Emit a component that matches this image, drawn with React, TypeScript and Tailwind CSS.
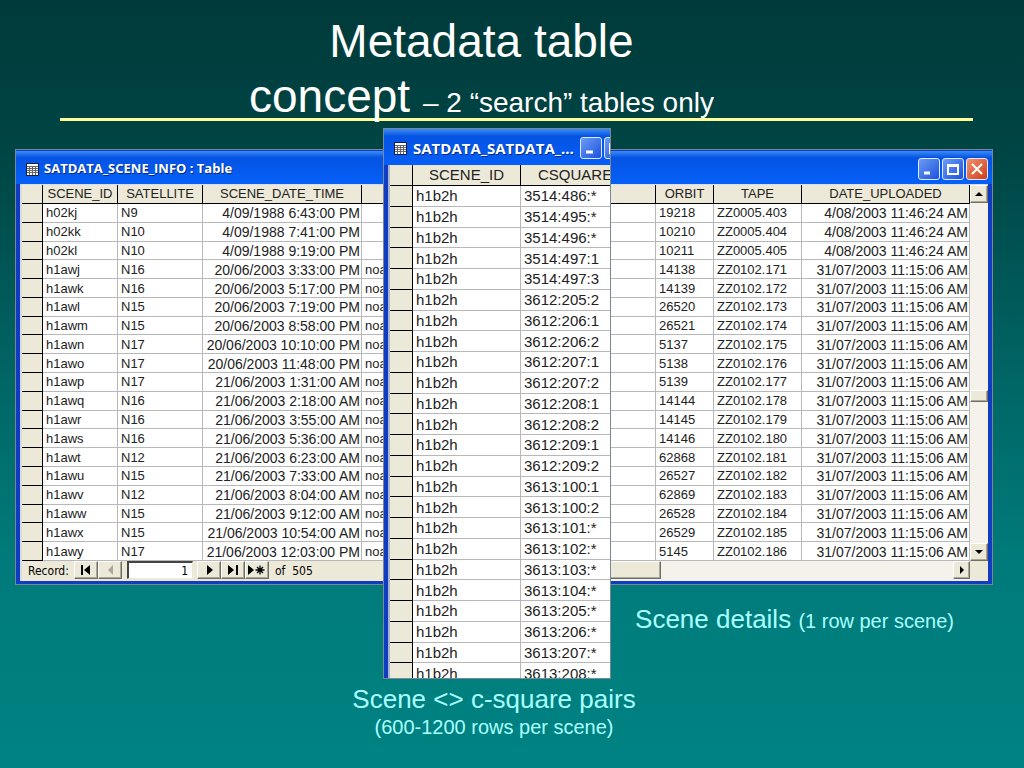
import { ReactNode } from 'react';

const scenes = [
  ['h02kj', 'N9', '4/09/1988 6:43:00 PM', '', '19218', 'ZZ0005.403', '4/08/2003 11:46:24 AM'],
  ['h02kk', 'N10', '4/09/1988 7:41:00 PM', '', '10210', 'ZZ0005.404', '4/08/2003 11:46:24 AM'],
  ['h02kl', 'N10', '4/09/1988 9:19:00 PM', '', '10211', 'ZZ0005.405', '4/08/2003 11:46:24 AM'],
  ['h1awj', 'N16', '20/06/2003 3:33:00 PM', 'noa', '14138', 'ZZ0102.171', '31/07/2003 11:15:06 AM'],
  ['h1awk', 'N16', '20/06/2003 5:17:00 PM', 'noa', '14139', 'ZZ0102.172', '31/07/2003 11:15:06 AM'],
  ['h1awl', 'N15', '20/06/2003 7:19:00 PM', 'noa', '26520', 'ZZ0102.173', '31/07/2003 11:15:06 AM'],
  ['h1awm', 'N15', '20/06/2003 8:58:00 PM', 'noa', '26521', 'ZZ0102.174', '31/07/2003 11:15:06 AM'],
  ['h1awn', 'N17', '20/06/2003 10:10:00 PM', 'noa', '5137', 'ZZ0102.175', '31/07/2003 11:15:06 AM'],
  ['h1awo', 'N17', '20/06/2003 11:48:00 PM', 'noa', '5138', 'ZZ0102.176', '31/07/2003 11:15:06 AM'],
  ['h1awp', 'N17', '21/06/2003 1:31:00 AM', 'noa', '5139', 'ZZ0102.177', '31/07/2003 11:15:06 AM'],
  ['h1awq', 'N16', '21/06/2003 2:18:00 AM', 'noa', '14144', 'ZZ0102.178', '31/07/2003 11:15:06 AM'],
  ['h1awr', 'N16', '21/06/2003 3:55:00 AM', 'noa', '14145', 'ZZ0102.179', '31/07/2003 11:15:06 AM'],
  ['h1aws', 'N16', '21/06/2003 5:36:00 AM', 'noa', '14146', 'ZZ0102.180', '31/07/2003 11:15:06 AM'],
  ['h1awt', 'N12', '21/06/2003 6:23:00 AM', 'noa', '62868', 'ZZ0102.181', '31/07/2003 11:15:06 AM'],
  ['h1awu', 'N15', '21/06/2003 7:33:00 AM', 'noa', '26527', 'ZZ0102.182', '31/07/2003 11:15:06 AM'],
  ['h1awv', 'N12', '21/06/2003 8:04:00 AM', 'noa', '62869', 'ZZ0102.183', '31/07/2003 11:15:06 AM'],
  ['h1aww', 'N15', '21/06/2003 9:12:00 AM', 'noa', '26528', 'ZZ0102.184', '31/07/2003 11:15:06 AM'],
  ['h1awx', 'N15', '21/06/2003 10:54:00 AM', 'noa', '26529', 'ZZ0102.185', '31/07/2003 11:15:06 AM'],
  ['h1awy', 'N17', '21/06/2003 12:03:00 PM', 'noa', '5145', 'ZZ0102.186', '31/07/2003 11:15:06 AM'],
];

const squares = [
  '3514:486:*', '3514:495:*', '3514:496:*', '3514:497:1', '3514:497:3', '3612:205:2',
  '3612:206:1', '3612:206:2', '3612:207:1', '3612:207:2', '3612:208:1', '3612:208:2',
  '3612:209:1', '3612:209:2', '3613:100:1', '3613:100:2', '3613:101:*', '3613:102:*',
  '3613:103:*', '3613:104:*', '3613:205:*', '3613:206:*', '3613:207:*', '3613:208:*',
];

const raised =
  'flex items-center justify-center bg-[#ece9d8] border border-t-white border-l-white border-r-[#716f64] border-b-[#716f64] shadow-[inset_-1px_-1px_0_#aca899]';
const selector = 'bg-[#ece9d8] border-r border-b border-r-black border-b-black';
const heading = 'bg-[#ece9d8] border-r border-b border-black p-0 text-center font-normal whitespace-nowrap';
const cell = 'border-r border-b border-[#b8b8b8] pt-px pb-0 pl-[3px] whitespace-nowrap';
const dateCell = 'border-r border-b border-[#b8b8b8] pl-0 pr-px pt-px pb-0 text-right text-sm leading-4 whitespace-nowrap';

function TableIcon() {
  return (
    <svg width="13" height="13" viewBox="0 0 13 13" className="shrink-0" aria-hidden="true">
      <rect width="13" height="13" fill="#10204c" />
      <rect x="1" y="1" width="11" height="11" fill="#fff" />
      <path d="M1 3.500h11M1 5.500h11M1 7.500h11M1 9.500h11M3.500 3v9M6.500 3v9M9.500 3v9" stroke="#666" strokeWidth="1" />
    </svg>
  );
}

function TitleButton({ label, close, children }: { label: string; close?: boolean; children: ReactNode }) {
  return (
    <button
      aria-label={label}
      className={`flex h-[22px] w-[22px] shrink-0 items-center justify-center rounded-[3px] border border-[#dfe8ff] bg-linear-to-br ${
        close ? 'from-[#f0906c] to-[#cf3a14]' : 'from-[#6c9bf5] to-[#1d4fdc]'
      }`}
    >
      <svg width="14" height="14" viewBox="0 0 14 14" fill="none" stroke="#fff" strokeWidth="2" aria-hidden="true">
        {children}
      </svg>
    </button>
  );
}

function Arrow({ d }: { d: string }) {
  return (
    <svg width="20" height="12" viewBox="0 0 20 12" className="shrink-0" aria-hidden="true">
      <path d={d} fill="#000" />
    </svg>
  );
}

function SceneWindow() {
  return (
    <section className="border border-[#7b8794] bg-[#0f3cc0] px-1 pb-[3px] pt-px">
      <div className="-mx-1 flex h-[33px] items-center bg-linear-to-b from-[#3b8cf5] via-[#0553e3] via-20% to-[#0560f8] pl-[10px] pr-1 pt-[3px]">
        <TableIcon />
        <h2 className="ml-[5px] flex-1 font-['Open_Sans',sans-serif] text-[13px] font-bold text-white [text-shadow:1px_1px_#0a2a80]">
          SATDATA_SCENE_INFO : Table
        </h2>
        <div className="flex gap-[2px]">
          <TitleButton label="Minimize"><path d="M2 11h6" strokeWidth="3" /></TitleButton>
          <TitleButton label="Maximize"><path d="M2 3h10v9H2zM2 4h10" /></TitleButton>
          <TitleButton label="Close" close><path d="M2 2l10 10M12 2L2 12" /></TitleButton>
        </div>
      </div>

      <div className="border-l-2 border-t border-[#d8dce8] bg-[#f4f2ea]">
        <div className="flex">
          <table className="h-[376px] flex-1 table-fixed border-separate border-spacing-0 bg-white text-[13px] leading-4 text-[#222]">
            <colgroup>
              <col className="w-[21px]" />
              <col className="w-[75px]" />
              <col className="w-[85px]" />
              <col className="w-[159px]" />
              <col />
              <col className="w-[58px]" />
              <col className="w-[88px]" />
              <col className="w-[168px]" />
            </colgroup>
            <thead>
              <tr className="h-[19px]">
                <td className={selector} />
                <th className={heading}>SCENE_ID</th>
                <th className={heading}>SATELLITE</th>
                <th className={heading}>SCENE_DATE_TIME</th>
                <td className={heading} />
                <th className={heading}>ORBIT</th>
                <th className={heading}>TAPE</th>
                <th className={heading}>DATE_UPLOADED</th>
              </tr>
            </thead>
            <tbody>
              {scenes.map(([id, satellite, taken, source, orbit, tape, uploaded]) => (
                <tr key={id}>
                  <td className={selector} />
                  <td className={cell}>{id}</td>
                  <td className={cell}>{satellite}</td>
                  <td className={dateCell}>{taken}</td>
                  <td className={cell}>{source}</td>
                  <td className={cell}>{orbit}</td>
                  <td className={cell}>{tape}</td>
                  <td className={dateCell}>{uploaded}</td>
                </tr>
              ))}
            </tbody>
          </table>
          <div className="flex w-[18px] flex-col">
            <button aria-label="Scroll up" className={`${raised} h-[18px]`}><Arrow d="M6 8h8l-4-4z" /></button>
            <div className="flex-1" />
            <div className={`${raised} h-3`} />
            <div className="h-[141px]" />
            <button aria-label="Scroll down" className={`${raised} h-[18px]`}><Arrow d="M6 4h8l-4 4z" /></button>
          </div>
        </div>

        <div className="flex h-5 items-start font-['DejaVu_Sans_Condensed','DejaVu_Sans',sans-serif] text-xs text-black">
          <div className="flex h-full flex-1 items-start bg-[#ece9d8]">
            <label htmlFor="record" className="w-[52px] pl-[6px] leading-5">Record:</label>
            <button aria-label="First record" className={`${raised} h-[18px] w-6`}><Arrow d="M5 1h2v10H5zM14 1v10L8 6z" /></button>
            <button aria-label="Previous record" className={`${raised} h-[18px] w-6`}>
              <svg width="20" height="12" viewBox="0 0 20 12" aria-hidden="true"><path d="M13 1v10L8 6z" fill="#aca899" /></svg>
            </button>
            <input
              id="record"
              defaultValue="1"
              className="ml-[5px] h-[18px] w-[66px] border-2 border-b border-r border-[#444] border-b-[#ece9d8] border-r-[#ece9d8] bg-white pr-1 text-right text-xs"
            />
            <button aria-label="Next record" className={`${raised} ml-1 h-[18px] w-6`}><Arrow d="M8 1v10l6-5z" /></button>
            <button aria-label="Last record" className={`${raised} h-[18px] w-6`}><Arrow d="M5 1v10l6-5zM13 1h2v10h-2z" /></button>
            <button aria-label="New record" className={`${raised} h-[18px] w-6`}>
              <svg width="20" height="12" viewBox="0 0 20 12" aria-hidden="true">
                <path d="M1 1v10l6-5z" fill="#000" />
                <path d="M13 1.500v9M8.500 6h9M10 3l6 6M16 3l-6 6" stroke="#000" strokeWidth="1.300" />
              </svg>
            </button>
            <span className="pl-[6px] leading-5">of&nbsp; 505</span>
          </div>
          <div className={`${raised} h-[18px] w-[52px]`} />
          <div className="w-[292px]" />
          <button aria-label="Scroll right" className={`${raised} h-[18px] w-[17px]`}><Arrow d="M8 2v8l4-4z" /></button>
          <div className="h-full w-[18px] bg-[#ece9d8]" />
        </div>
      </div>
    </section>
  );
}

function SquareWindow() {
  return (
    <section className="absolute -top-[21px] left-[368px] h-[551px] w-[228px] overflow-hidden border border-[#7b8794] bg-[#0f3cc0] pl-1">
      <div className="-ml-1 flex h-9 items-center bg-linear-to-b from-[#3b8cf5] via-[#0553e3] via-20% to-[#0560f8] pl-[10px] pt-[2px]">
        <TableIcon />
        <h2 className="ml-[6px] w-[167px] shrink-0 font-['Open_Sans',sans-serif] text-[15px] font-bold text-white [text-shadow:1px_1px_#0a2a80]">
          SATDATA_SATDATA_...
        </h2>
        <div className="flex gap-[2px]">
          <TitleButton label="Minimize"><path d="M2 11h7" strokeWidth="3" /></TitleButton>
          <TitleButton label="Maximize"><path d="M2 3h10v9H2zM2 4h10" /></TitleButton>
        </div>
      </div>
      <table className="h-[519px] w-[300px] table-fixed border-separate border-spacing-0 border-l-2 border-[#aab4d0] bg-white text-[15px] leading-4 text-[#222]">
        <colgroup>
          <col className="w-[23px]" />
          <col className="w-[108px]" />
          <col />
        </colgroup>
        <thead>
          <tr className="h-[21px]">
            <td className={selector} />
            <th className={heading}>SCENE_ID</th>
            <th className="border-b border-black bg-[#ece9d8] py-0 pl-[17px] text-left font-normal">CSQUARE</th>
          </tr>
        </thead>
        <tbody>
          {squares.map((square) => (
            <tr key={square}>
              <td className={selector} />
              <td className={cell}>h1b2h</td>
              <td className={cell}>{square}</td>
            </tr>
          ))}
        </tbody>
      </table>
    </section>
  );
}

export default function App() {
  return (
    <main className="min-h-screen bg-[linear-gradient(#003a3a,#004545_20%,#006262_46%,#007a7a_72%,#008282)] font-['Liberation_Sans',Arial,sans-serif]">
      <header className="ml-[60px] mr-[51px] border-b-[3px] border-[#ffff99] pt-[14px]">
        <h1 className="h-[104px] pr-[70px] text-center text-[46px] leading-[55px] text-white">
          Metadata table
          <br />
          concept <span className="text-[28px]">– 2 “search” tables only</span>
        </h1>
      </header>

      <div className="relative ml-[15px] mr-[31px] mt-7">
        <SceneWindow />
        <SquareWindow />
      </div>

      <p className="mr-[70px] mt-[18px] text-right text-[26px] leading-8 text-[#aaffff]">
        Scene details <span className="text-xl">(1 row per scene)</span>
      </p>
      <p className="mr-9 mt-12 text-center text-[26px] leading-8 text-[#aaffff]">
        Scene &lt;&gt; c-square pairs
        <span className="block text-xl leading-6">(600-1200 rows per scene)</span>
      </p>
    </main>
  );
}
